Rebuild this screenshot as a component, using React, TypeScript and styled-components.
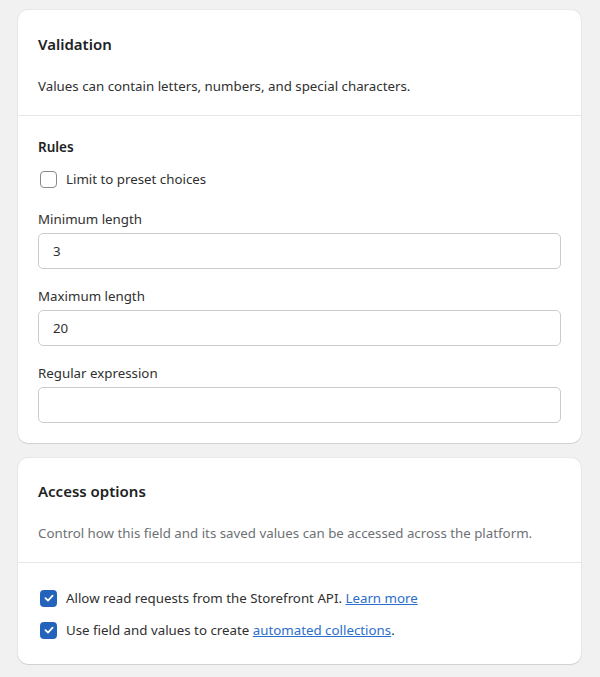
import React from 'react';
import { createGlobalStyle, styled } from 'styled-components';

const GlobalStyle = createGlobalStyle`
    html, body {
        margin: 0;
        padding: 0;
        background: #f1f1f1;
    }
    body {
        font-family: 'Noto Sans', 'Open Sans', sans-serif;
        font-size: 13.3px;
        color: #303030;
        -webkit-font-smoothing: antialiased;
    }
`;

const CheckIcon = () => (
    <svg width="12" height="12" viewBox="0 0 12 12" fill="none">
        <path d="M2.5 6.2L5 8.6L9.6 3.6" stroke="#fff" strokeWidth="1.8" strokeLinecap="round" strokeLinejoin="round" />
    </svg>
);

const Checkbox = ({ checked, label }: { checked?: boolean; label: React.ReactNode }) => (
    <CheckRow>
        <Box $checked={checked}>{checked && <CheckIcon />}</Box>
        <span>{label}</span>
    </CheckRow>
);

const Field = ({ label, value }: { label: string; value?: string }) => (
    <FieldWrap>
        <Label>{label}</Label>
        <Input defaultValue={value} />
    </FieldWrap>
);

const App = () => {
    return (
        <Page>
            <GlobalStyle />
            <Card>
                <Section $top={24} $bottom={19}>
                    <Title>Validation</Title>
                    <Description>Values can contain letters, numbers, and special characters.</Description>
                </Section>
                <Section $top={21} $bottom={20}>
                    <SubTitle>Rules</SubTitle>
                    <RulesCheck>
                        <Checkbox label="Limit to preset choices" />
                    </RulesCheck>
                    <Fields>
                        <Field label="Minimum length" value="3" />
                        <Field label="Maximum length" value="20" />
                        <Field label="Regular expression" />
                    </Fields>
                </Section>
            </Card>
            <Card>
                <Section $top={23} $bottom={19}>
                    <Title>Access options</Title>
                    <Description $muted>
                        Control how this field and its saved values can be accessed across the platform.
                    </Description>
                </Section>
                <Section $top={23} $bottom={22}>
                    <CheckList>
                        <Checkbox
                            checked
                            label={
                                <>
                                    Allow read requests from the Storefront API. <Link href="#">Learn more</Link>
                                </>
                            }
                        />
                        <Checkbox
                            checked
                            label={
                                <>
                                    Use field and values to create <Link href="#">automated collections</Link>.
                                </>
                            }
                        />
                    </CheckList>
                </Section>
            </Card>
        </Page>
    );
};

const Page = styled.div`
    display: flex;
    flex-direction: column;
    gap: 15px;
    padding: 10px 19px 13px 18px;
`;

const Card = styled.div`
    background: #fff;
    border-radius: 10px;
    box-shadow: 0 1px 1px rgba(0, 0, 0, 0.1), 0 0 0 1px rgba(0, 0, 0, 0.035);
    overflow: hidden;
`;

const Section = styled.div<{ $top: number; $bottom: number }>`
    padding: ${(p) => p.$top}px 20px ${(p) => p.$bottom}px;
    & + & {
        border-top: 1px solid #e6e6e6;
    }
`;

const Title = styled.h2`
    margin: 0;
    font-size: 15px;
    line-height: 20px;
    font-weight: 600;
    color: #202223;
`;

const Description = styled.p<{ $muted?: boolean }>`
    margin: 22px 0 0;
    line-height: 20px;
    color: ${(p) => (p.$muted ? '#6d7175' : '#303030')};
`;

const SubTitle = styled.h3`
    margin: 0;
    font-size: 13.5px;
    line-height: 20px;
    font-weight: 600;
    color: #202223;
`;

const RulesCheck = styled.div`
    margin-top: 10px;
`;

const CheckRow = styled.label`
    display: flex;
    align-items: center;
    gap: 9px;
    height: 24px;
    padding-left: 2px;
    line-height: 20px;
    color: #303030;
`;

const Box = styled.span<{ $checked?: boolean }>`
    display: flex;
    align-items: center;
    justify-content: center;
    box-sizing: border-box;
    width: 17px;
    height: 17px;
    border-radius: 4px;
    border: ${(p) => (p.$checked ? 'none' : '1.5px solid #8a8a8a')};
    background: ${(p) => (p.$checked ? '#2463bc' : '#fff')};
    flex: 0 0 auto;
`;

const Fields = styled.div`
    display: flex;
    flex-direction: column;
    gap: 17px;
    margin-top: 18px;
`;

const FieldWrap = styled.div`
    display: flex;
    flex-direction: column;
    gap: 4px;
`;

const Label = styled.span`
    line-height: 20px;
    color: #303030;
`;

const Input = styled.input`
    box-sizing: border-box;
    height: 36px;
    width: 100%;
    padding: 0 14px;
    border: 1px solid #c9cccf;
    border-radius: 5px;
    font-family: inherit;
    font-size: 13.3px;
    color: #303030;
    outline: none;
`;

const CheckList = styled.div`
    display: flex;
    flex-direction: column;
    gap: 8px;
`;

const Link = styled.a`
    color: #2c6ecb;
    text-decoration: underline;
`;

export default App;
